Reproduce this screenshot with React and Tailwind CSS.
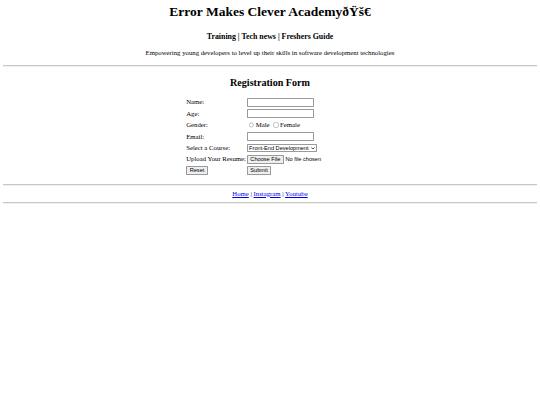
import React from 'react';

const control = "font-['Liberation_Sans',Arial,sans-serif] text-[13.333px]";
const hrLine = "h-0 my-2 border-t border-b border-t-[#c8c8c8] border-b-[#f0f0f0]";
const nativeBtn = `${control} bg-[#efefef] border border-[#9a9a9a] rounded-[2px] px-[6px] py-[1px]`;

function Row({ label, children }) {
    return (
        <tr>
            <td className="h-[27px] px-px py-0 align-middle">{label}</td>
            <td className="h-[27px] px-px py-0 align-middle">{children}</td>
        </tr>
    );
}

function TextInput({ type = 'text' }) {
    return (
        <input
            type={type}
            className={`${control} w-[159px] h-[21px] border border-[#9a9a9a] rounded-[2px] px-[2px] bg-white align-middle`}
        />
    );
}

export default function App() {
    return (
        <div className="min-h-screen bg-white">
            <div className="[zoom:0.421875] w-[1280px] min-h-[960px] px-2 text-black text-[16px] font-['Liberation_Serif','Times_New_Roman',serif]">
                {/* Header */}
                <header className="text-center pt-[1px]">
                    <h1 className="text-[32px] leading-[1.15] font-bold mt-[8px] mb-[29px]">Error Makes Clever AcademyðŸš€</h1>
                    <h3 className="text-[18.72px] leading-[1.15] font-bold mt-[18.72px] mb-[20.3px]">Training | Tech news | Freshers Guide</h3>
                    <p className="leading-[1.15] mt-4 mb-[19px]">Empowering young developers to level up their skills in software development technologies</p>
                </header>
                <hr className={hrLine} />

                {/* Form */}
                <h2 className="text-center text-[24px] leading-[1.15] font-bold mt-[23px] mb-[19.92px]">Registration Form</h2>
                <form className="mb-[18px]">
                    <table className="mx-auto border-separate border-spacing-x-[2px] border-spacing-y-0 leading-[1.15]">
                        <tbody>
                            <Row label="Name:"><TextInput /></Row>
                            <Row label="Age:"><TextInput type="number" /></Row>
                            <Row label="Gender:">
                                <label className="inline-flex items-center">
                                    <input type="radio" name="gender" className="m-[3px] ml-[5px] w-[13px] h-[13px]" />Male
                                </label>{' '}
                                <label className="inline-flex items-center">
                                    <input type="radio" name="gender" className="m-[3px] ml-[5px] w-[13px] h-[13px]" />Female
                                </label>
                            </Row>
                            <Row label="Email:"><TextInput type="email" /></Row>
                            <Row label="Select a Course:">
                                <div className="relative inline-block align-middle">
                                    <select className={`${control} appearance-none w-[166px] h-[19px] pl-[3px] pr-[14px] border border-[#9a9a9a] rounded-[2px] bg-white`}>
                                        <option>Front-End Development</option>
                                        <option>Back-End Development</option>
                                        <option>Full Stack Development</option>
                                    </select>
                                    {/* dropdown arrow */}
                                    <svg viewBox="0 0 10 6" className="pointer-events-none absolute right-[4px] top-[6.5px] w-[9px] h-[6px]">
                                        <path d="M1 1 L5 5 L9 1" fill="none" stroke="#000" strokeWidth="2" />
                                    </svg>
                                </div>
                            </Row>
                            <Row label="Upload Your Resume:">
                                <input
                                    type="file"
                                    className={`${control} align-middle file:font-['Liberation_Sans',Arial,sans-serif] file:text-[13.333px] file:bg-[#efefef] file:border file:border-[#9a9a9a] file:rounded-[2px] file:px-[6px] file:py-[1px] file:mr-[4px]`}
                                />
                            </Row>
                            <Row label={<button type="reset" className={nativeBtn}>Reset</button>}>
                                <button type="submit" className={nativeBtn}>Submit</button>
                            </Row>
                        </tbody>
                    </table>
                </form>
                <hr className={hrLine} />

                {/* Footer */}
                <footer className="text-center leading-[1.15] pt-[1px] pb-[1.6px]">
                    <a href="#" className="text-[#0000ee] underline">Home</a> | <a href="#" className="text-[#0000ee] underline">Instagram</a> | <a href="#" className="text-[#0000ee] underline">Youtube</a>
                </footer>
                <hr className={hrLine} />
            </div>
        </div>
    );
}
